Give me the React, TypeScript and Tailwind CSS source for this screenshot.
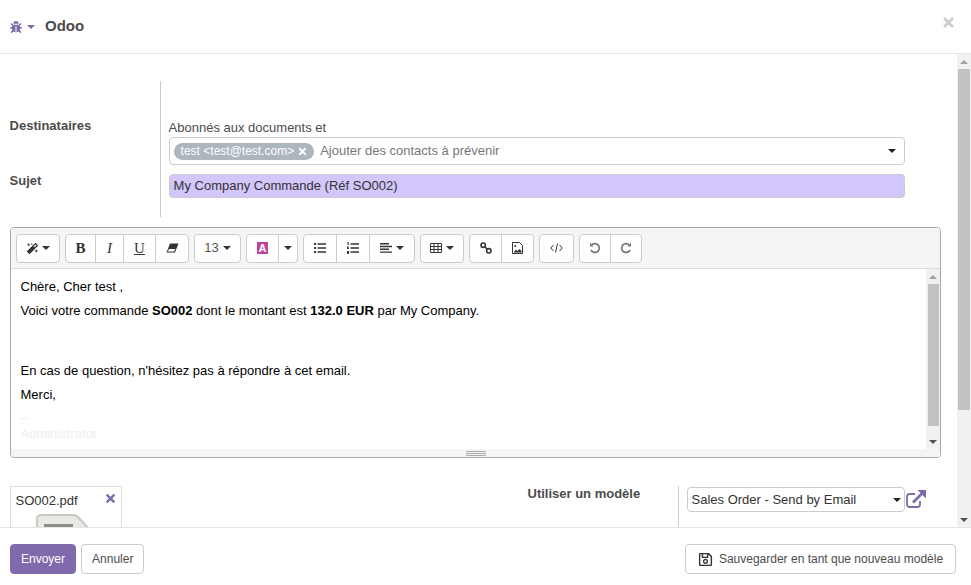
import { FaBug, FaMagic, FaRegSave, FaTimes } from "react-icons/fa";
import type { ReactNode } from "react";

function Caret({ className = "border-t-[#333]" }: { className?: string }) {
  return <span className={`inline-block w-0 h-0 border-x-4 border-t-4 border-x-transparent ${className}`} />;
}

function CaretUp() {
  return <span className="inline-block w-0 h-0 border-x-4 border-b-4 border-x-transparent border-b-[#a3a3a3]" />;
}

function Tool({ children, className = "", last = false }: { children: ReactNode; className?: string; last?: boolean }) {
  return (
    <div className={`h-full flex items-center justify-center gap-1 text-[#333] ${last ? "" : "border-r border-[#ccc]"} ${className}`}>
      {children}
    </div>
  );
}

function Group({ children }: { children: ReactNode }) {
  return <div className="h-[29px] flex items-center bg-white border border-[#ccc] rounded-[4px]">{children}</div>;
}

export default function App() {
  return (
    <div className="w-[971px] h-[585px] flex flex-col overflow-hidden bg-white text-[13px] text-[#4c4c4c]" style={{ fontFamily: '"Liberation Sans", Arial, sans-serif' }}>
      {/* Header */}
      <header className="h-[54px] shrink-0 flex items-center pl-[10px] pr-[15px] border-b border-[#e5e5e5]">
        <FaBug size={12} className="text-[#7c6ba8]" />
        <span className="ml-[5px] flex"><Caret className="border-t-[#7c6ba8]" /></span>
        <h4 className="ml-[10px] text-[15px] font-bold text-[#4c4c4c]">Odoo</h4>
        <FaTimes size={15} className="ml-auto -mt-2 text-[#cccccc]" />
      </header>

      {/* Body + page scrollbar */}
      <div className="flex-1 min-h-0 flex">
        <main className="flex-1 min-w-0 overflow-hidden pt-[27px] pl-[10px] pr-[16px]">
          <div className="flex h-[136px]">
            <div className="w-[151px] shrink-0 border-r border-[#ccc] font-bold -ml-[0.4px]">
              <div className="pt-[37px] leading-[15px]">Destinataires</div>
              <div className="pt-[40px] leading-[15px]">Sujet</div>
            </div>
            <div className="flex-1 pl-[8px] pr-[36px] pt-[39px]">
              <div className="leading-[15px]">Abonnés aux documents et</div>
              <div className="mt-[2px] h-[28px] flex items-center pl-[4px] pr-[8px] border border-[#ccc] rounded-[4px]">
                <span className="h-[17px] pl-[7px] pr-[6px] flex items-center gap-[3px] rounded-full bg-[#adb5bd] text-white text-[12px]">
                  test &lt;test@test.com&gt;
                  <FaTimes size={11} />
                </span>
                <span className="ml-[6px] text-[#777]">Ajouter des contacts à prévenir</span>
                <span className="ml-auto flex"><Caret className="border-t-[#222]" /></span>
              </div>
              <div className="mt-[9px] h-[24px] flex items-center px-[4px] rounded-[4px] border border-[#ccc] bg-[#d2c6fb] text-[#333]">
                My Company Commande (Réf SO002)
              </div>
            </div>
          </div>

          {/* Editor */}
          <section className="mt-[10px] w-[931px] h-[231px] flex flex-col border border-[#a9a9a9] rounded-[4px] overflow-hidden">
            <div className="h-[41px] shrink-0 flex items-center gap-[5px] pl-[5px] bg-[#f5f5f5] border-b border-[#ddd]">
              <Group><Tool className="w-[42px]" last><FaMagic size={11} /><Caret /></Tool></Group>
              <Group>
                <Tool className="w-[30px] font-bold text-[15px]"><span style={{ fontFamily: '"Liberation Serif", serif' }}>B</span></Tool>
                <Tool className="w-[28px] italic text-[15px]"><span style={{ fontFamily: '"Liberation Serif", serif' }}>I</span></Tool>
                <Tool className="w-[32px] text-[15px] underline"><span style={{ fontFamily: '"Liberation Serif", serif' }}>U</span></Tool>
                <Tool className="w-[32px]" last><EraserIcon /></Tool>
              </Group>
              <Group><Tool className="w-[45px] text-[#555]" last>13<Caret /></Tool></Group>
              <Group>
                <Tool className="w-[32px]">
                  <span className="w-[11px] h-[12px] flex items-center justify-center bg-[#c0429c] text-white text-[11px] font-bold">A</span>
                </Tool>
                <Tool className="w-[18px]" last><Caret /></Tool>
              </Group>
              <Group>
                <Tool className="w-[33px]"><ListIcon /></Tool>
                <Tool className="w-[33px]"><OrderedIcon /></Tool>
                <Tool className="w-[44px]" last><AlignIcon /><Caret /></Tool>
              </Group>
              <Group><Tool className="w-[42px]" last><TableIcon /><Caret /></Tool></Group>
              <Group>
                <Tool className="w-[32px]"><LinkIcon /></Tool>
                <Tool className="w-[31px]" last><PictureIcon /></Tool>
              </Group>
              <Group><Tool className="w-[33px]" last><CodeIcon /></Tool></Group>
              <Group>
                <Tool className="w-[31px]"><UndoIcon /></Tool>
                <Tool className="w-[30px]" last><RedoIcon /></Tool>
              </Group>
            </div>

            <div className="flex-1 min-h-0 flex">
              <div className="flex-1 min-w-0 pl-[9.5px] pt-[10px] text-black leading-[15px]">
                <p>Chère, Cher test ,</p>
                <p className="mt-[9px]">Voici votre commande <b>SO002</b> dont le montant est <b>132.0 EUR</b> par My Company.</p>
                <p className="mt-[45px]">En cas de question, n'hésitez pas à répondre à cet email.</p>
                <p className="mt-[9px]">Merci,</p>
                <div className="mt-[8px] text-[#eeeeee]">--</div>
                <div className="mt-[1px] text-[#eeeeee]">Administrator</div>
              </div>
              <div className="w-[14px] shrink-0 flex flex-col items-center bg-[#f1f1f1]">
                <span className="h-[15px] flex items-center"><CaretUp /></span>
                <div className="h-[142px] w-[11px] bg-[#c1c1c1]" />
                <div className="flex-1" />
                <span className="h-[15px] flex items-center"><Caret className="border-t-[#505050]" /></span>
              </div>
            </div>

            <div className="h-[8px] shrink-0 flex flex-col items-center justify-center gap-[1px] bg-[#f5f5f5]">
              <span className="w-[20px] h-px bg-[#a9a9a9]" />
              <span className="w-[20px] h-px bg-[#a9a9a9]" />
              <span className="w-[20px] h-px bg-[#a9a9a9]" />
            </div>
          </section>

          {/* Attachments and template */}
          <div className="mt-[28px] flex">
            <div className="relative w-[112px] h-[120px] shrink-0 border border-[#ddd] pl-[4.5px] pt-[6px] text-[#333] leading-[15px]">
              SO002.pdf
              <FaTimes size={13} className="absolute right-[4px] top-[5px] text-[#7c6ba8]" />
              <PdfIcon />
            </div>
            <div className="ml-[405.500px] w-[151.500px] shrink-0 font-bold whitespace-nowrap leading-[15px] border-r border-[#ccc] h-[60px]">Utiliser un modèle</div>
            <div className="ml-[8px] h-[25px] w-[218px] mt-px flex items-center pl-[3.500px] pr-[3px] border border-[#ccc] rounded-[4px] text-[#333]">
              Sales Order - Send by Email
              <span className="ml-auto flex"><Caret className="border-t-[#222]" /></span>
            </div>
            <ExternalIcon />
          </div>
        </main>

        <div className="w-[14px] shrink-0 flex flex-col items-center bg-[#f1f1f1]">
          <span className="h-[15px] flex items-center"><CaretUp /></span>
          <div className="w-[12px] h-[341px] bg-[#c1c1c1]" />
          <div className="flex-1" />
          <span className="h-[15px] flex items-center"><Caret className="border-t-[#505050]" /></span>
        </div>
      </div>

      {/* Footer */}
      <footer className="h-[58px] shrink-0 flex items-start pt-[16px] pl-[10px] pr-[15px] border-t border-[#e5e5e5] bg-white text-[12px]">
        <button className="h-[30px] px-[10px] rounded-[4px] bg-[#7f6aab] border border-[#7f6aab] text-white">Envoyer</button>
        <button className="ml-[5px] h-[30px] px-[10px] rounded-[4px] bg-white border border-[#ccc] text-[#4c4c4c]">Annuler</button>
        <button className="ml-auto h-[30px] w-[271px] flex items-center justify-center gap-[6px] rounded-[4px] bg-white border border-[#ccc] text-[#4c4c4c]">
          <FaRegSave size={15} className="text-[#333]" />
          Sauvegarder en tant que nouveau modèle
        </button>
      </footer>
    </div>
  );
}

function PdfIcon() {
  return (
    <svg width="58" height="62" viewBox="0 0 58 62" className="mt-[6px] ml-[20px]">
      <path d="M5 1h32q3 0 5 2l12 13q2 2 2 5v36a4 4 0 0 1-4 4H5a4 4 0 0 1-4-4V5a4 4 0 0 1 4-4z" fill="#e8ebe3" stroke="#c5c9bf" strokeWidth="2" />
      <rect x="8" y="10" width="29" height="3" fill="#8d8f8a" />
    </svg>
  );
}

function ExternalIcon() {
  return (
    <svg width="20" height="18" viewBox="0 0 20 18" className="ml-[1px] mt-[4px] text-[#7c6ba8]" fill="none" stroke="currentColor">
      <path d="M9 4H3.500A2.500 2.500 0 0 0 1 6.500v8A2.500 2.500 0 0 0 3.500 17h8a2.500 2.500 0 0 0 2.500-2.500V11" strokeWidth="1.800" />
      <path d="M7 12.500 16 3.500" strokeWidth="2.600" />
      <path d="M11.500 0H20v8.500z" fill="currentColor" stroke="none" />
    </svg>
  );
}

function EraserIcon() {
  return (
    <svg width="13" height="10" viewBox="0 0 13 10" fill="#333">
      <path d="M4 .5h8.500L9 9.500H.5zM3 6 1.800 8.500h6.400L9.300 6z" fillRule="evenodd" />
    </svg>
  );
}

function ListIcon() {
  return (
    <svg width="12" height="10" viewBox="0 0 12 10" fill="#333">
      <path d="M0 0h2v2H0zM0 4h2v2H0zM0 8h2v2H0zM3.500 .3H12v1.400H3.500zM3.500 4.300H12v1.400H3.500zM3.500 8.300H12v1.400H3.500z" />
    </svg>
  );
}

function OrderedIcon() {
  return (
    <svg width="12" height="12" viewBox="0 0 12 12" fill="#333">
      <path d="M.5 0h1.200v3H.5zM0 4.500h2v1H1v.5h1v1H0zM0 9h2v3H0v-.7h1v-.3H0zM3.500 1.300H12v1.400H3.500zM3.500 5.300H12v1.400H3.500zM3.500 9.300H12v1.400H3.500z" />
    </svg>
  );
}

function AlignIcon() {
  return (
    <svg width="12" height="10" viewBox="0 0 12 10" fill="#333">
      <path d="M0 0h9v1.400H0zM0 2.800h12v1.400H0zM0 5.600h9V7H0zM0 8.400h12v1.400H0z" />
    </svg>
  );
}

function TableIcon() {
  return (
    <svg width="12" height="10" viewBox="0 0 12 10" fill="none" stroke="#333" strokeWidth="1">
      <path d="M.5.5h11v9H.5zM.5 3.500h11M.5 6.500h11M4 .5v9M8 .5v9" />
    </svg>
  );
}

function LinkIcon() {
  return (
    <svg width="12" height="12" viewBox="0 0 12 12" fill="none" stroke="#333" strokeWidth="1.600">
      <circle cx="3.200" cy="3.200" r="2.200" />
      <circle cx="8.800" cy="8.800" r="2.200" />
      <path d="M4.500 4.500l3 3" />
    </svg>
  );
}

function PictureIcon() {
  return (
    <svg width="11" height="12" viewBox="0 0 11 12" fill="none" stroke="#333">
      <path d="M.5.5h7l3 3v8H.5z" />
      <circle cx="3.200" cy="4" r="1" fill="#333" stroke="none" />
      <path d="M1.500 10.500l2.500-3 1.500 1.500 2-2 2 2v1.500z" fill="#333" stroke="none" />
    </svg>
  );
}

function CodeIcon() {
  return (
    <svg width="13" height="10" viewBox="0 0 13 10" fill="none" stroke="#333">
      <path d="M3.500 2 .8 5l2.700 3M9.500 2l2.700 3-2.700 3M7.500.5l-2 9" />
    </svg>
  );
}

function UndoIcon() {
  return (
    <svg width="12" height="12" viewBox="0 0 12 12" fill="none" stroke="#777" strokeWidth="1.700">
      <path d="M2.600 3.200A4.400 4.400 0 1 1 2 8" />
      <path d="M1 .8v3.600h3.600" fill="#777" stroke="none" />
    </svg>
  );
}

function RedoIcon() {
  return (
    <svg width="12" height="12" viewBox="0 0 12 12" fill="none" stroke="#777" strokeWidth="1.700">
      <path d="M9.400 3.200A4.400 4.400 0 1 0 10 8" />
      <path d="M11 .8v3.600H7.400" fill="#777" stroke="none" />
    </svg>
  );
}
